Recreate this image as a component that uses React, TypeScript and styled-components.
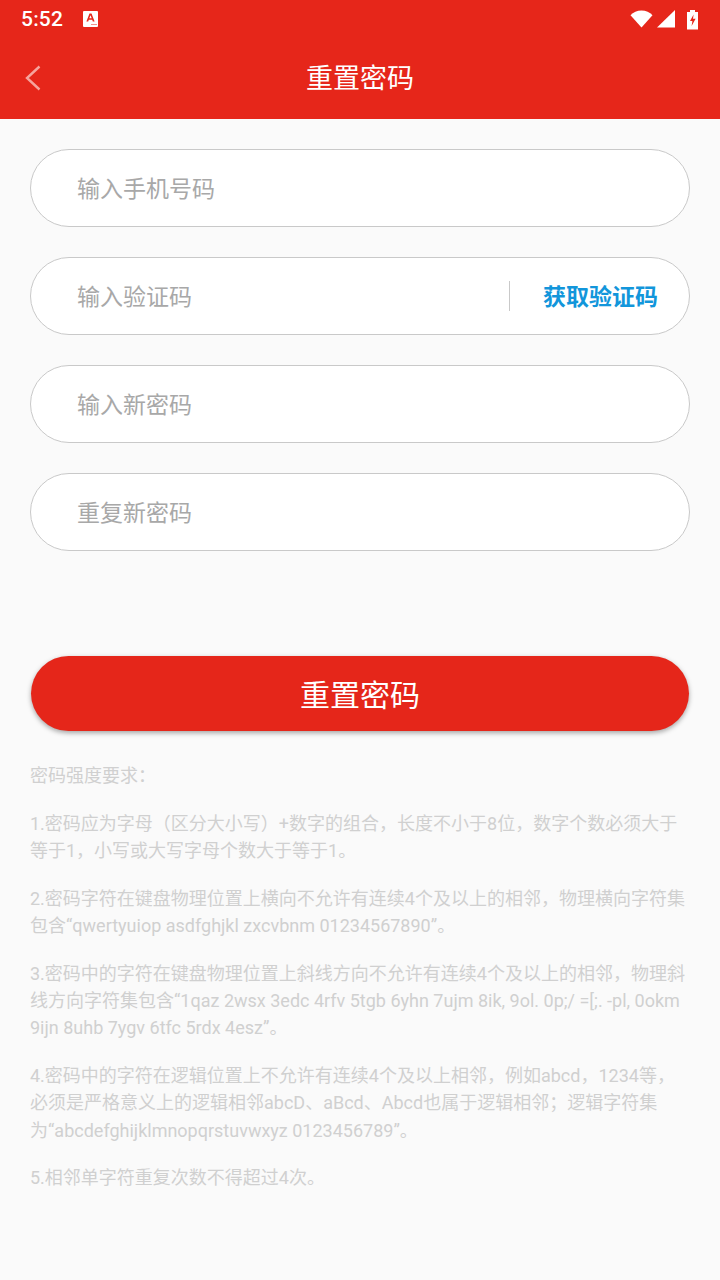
import React from "react";
import styled, { createGlobalStyle } from "styled-components";

const FONT = `Roboto, "Noto Sans CJK SC", "Noto Sans", sans-serif`;

const GlobalStyle = createGlobalStyle`
  html, body {
    margin: 0;
    padding: 0;
    background: #fafafa;
    font-family: ${FONT};
  }
  * {
    box-sizing: border-box;
  }
`;

const Page = styled.div`
  width: 720px;
  height: 1280px;
  overflow: hidden;
  background: #fafafa;
  display: flex;
  flex-direction: column;
`;

const Header = styled.header`
  height: 119px;
  background: #e6261a;
  color: #fff;
  display: flex;
  flex-direction: column;
`;

const StatusBar = styled.div`
  height: 38px;
  display: flex;
  align-items: center;
  justify-content: space-between;
  padding: 0 21px 0 21px;
`;

const StatusLeft = styled.div`
  display: flex;
  align-items: center;
  gap: 20px;
`;

const Clock = styled.span`
  font-size: 21px;
  font-weight: 500;
  letter-spacing: 0.2px;
`;

const StatusIcons = styled.div`
  display: flex;
  align-items: center;
  gap: 4px;
`;

const Battery = styled.svg`
  margin-left: 6px;
`;

const NavBar = styled.div`
  flex: 1;
  position: relative;
  display: flex;
  align-items: center;
  justify-content: center;
  padding-bottom: 4px;
`;

const BackButton = styled.button`
  position: absolute;
  left: 25px;
  top: 27px;
  width: 16px;
  height: 26px;
  padding: 0;
  border: none;
  background: none;
  display: flex;
`;

const Title = styled.h1`
  margin: 0;
  font-size: 27px;
  font-weight: 400;
`;

const Form = styled.form`
  display: flex;
  flex-direction: column;
  gap: 30px;
  padding: 30px 30px 0;
`;

const Field = styled.div`
  height: 78px;
  background: #fff;
  border: 1px solid #c9c9c9;
  border-radius: 39px;
  display: flex;
  align-items: center;
  padding: 0 31px 2px 46px;
`;

const Placeholder = styled.span`
  flex: 1;
  font-size: 23px;
  color: #a8a8a8;
`;

const CodeButton = styled.span`
  height: 30px;
  margin-top: 2px;
  border-left: 1px solid #c9c9c9;
  padding: 0 0 2px 33px;
  display: flex;
  align-items: center;
  font-size: 23px;
  font-weight: 700;
  color: #1296db;
`;

const Submit = styled.button`
  margin: 105px 31px 0;
  height: 75px;
  border: none;
  border-radius: 38px;
  background: #e5261a;
  color: #fff;
  font-family: ${FONT};
  font-size: 30px;
  padding: 0 0 2px;
  box-shadow: 0 2px 5px rgba(0, 0, 0, 0.35);
`;

const Rules = styled.div`
  padding: 31px 30px 0;
  display: flex;
  flex-direction: column;
  gap: 20.2px;
`;

const Rule = styled.p`
  margin: 0;
  font-size: 18px;
  line-height: 27.4px;
  color: #d0d0d0;
`;

const rules = [
  <>密码强度要求：</>,
  <>1.密码应为字母（区分大小写）+数字的组合，长度不小于8位，数字个数必须大于<br />等于1，小写或大写字母个数大于等于1。</>,
  <>2.密码字符在键盘物理位置上横向不允许有连续4个及以上的相邻，物理横向字符集<br />包含“qwertyuiop asdfghjkl zxcvbnm 01234567890”。</>,
  <>3.密码中的字符在键盘物理位置上斜线方向不允许有连续4个及以上的相邻，物理斜<br />线方向字符集包含“1qaz 2wsx 3edc 4rfv 5tgb 6yhn 7ujm 8ik, 9ol. 0p;/ =[;. -pl, 0okm<br />9ijn 8uhb 7ygv 6tfc 5rdx 4esz”。</>,
  <>4.密码中的字符在逻辑位置上不允许有连续4个及以上相邻，例如abcd，1234等，<br />必须是严格意义上的逻辑相邻abcD、aBcd、Abcd也属于逻辑相邻；逻辑字符集<br />为“abcdefghijklmnopqrstuvwxyz 0123456789”。</>,
  <>5.相邻单字符重复次数不得超过4次。</>,
];

export default function App() {
  return (
    <Page>
      <GlobalStyle />
      <Header>
        <StatusBar>
          <StatusLeft>
            <Clock>5:52</Clock>
            <svg width="15" height="16" viewBox="0 0 15 16">
              <rect width="15" height="16" rx="1" fill="#fff" />
              <path d="M3.4 10.5 6.5 2.5h2l3.1 8H9.8l-.6-1.7H5.8L5.2 10.5Zm2.9-3.2h2.4L7.5 4.2Z" fill="#e6261a" />
              <path d="M8.5 13h1v1h-1Zm2 0h1v1h-1Zm2 0h1v1h-1Z" fill="#e6261a" />
            </svg>
          </StatusLeft>
          <StatusIcons>
            <svg width="23" height="18" viewBox="0 0 23 18">
              <path d="M11.5 17.5 0.5 5.2C3.2 2.3 7.1.5 11.5.5s8.3 1.8 11 4.7Z" fill="#fff" />
            </svg>
            <svg width="18" height="18" viewBox="0 0 18 18">
              <path d="M0 17.5 18 0v17.5Z" fill="#fff" />
            </svg>
            <Battery width="14" height="21" viewBox="0 0 14 21">
              <path d="M5 1h5v2h3v17.5H2V3h3Z" fill="#fff" />
              <path d="M8.6 5.5 5 12h2.4l-.8 5 4-7.2H8Z" fill="#e6261a" />
            </Battery>
          </StatusIcons>
        </StatusBar>
        <NavBar>
          <BackButton type="button" aria-label="返回">
            <svg width="16" height="26" viewBox="0 0 16 26" fill="none">
              <path d="M14.5 1.5 2 13l12.5 11.5" stroke="#f6a49d" strokeWidth="2.4" />
            </svg>
          </BackButton>
          <Title>重置密码</Title>
        </NavBar>
      </Header>
      <Form>
        <Field><Placeholder>输入手机号码</Placeholder></Field>
        <Field>
          <Placeholder>输入验证码</Placeholder>
          <CodeButton>获取验证码</CodeButton>
        </Field>
        <Field><Placeholder>输入新密码</Placeholder></Field>
        <Field><Placeholder>重复新密码</Placeholder></Field>
      </Form>
      <Submit type="button">重置密码</Submit>
      <Rules>
        {rules.map((r, i) => (
          <Rule key={i}>{r}</Rule>
        ))}
      </Rules>
    </Page>
  );
}
